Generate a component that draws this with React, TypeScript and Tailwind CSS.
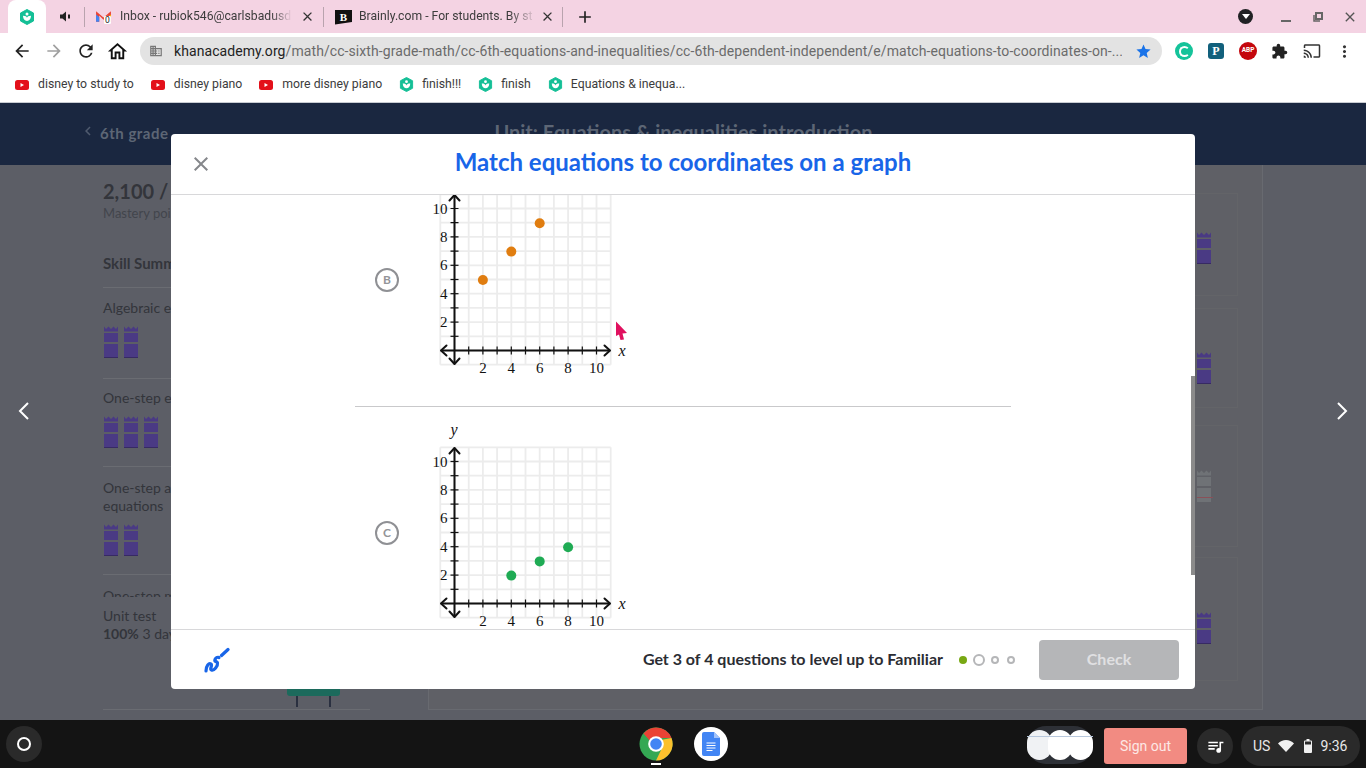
import {
  MdAdd,
  MdArrowBack,
  MdArrowForward,
  MdCast,
  MdChevronLeft,
  MdClose,
  MdDomain,
  MdExtension,
  MdMoreVert,
  MdOutlineHome,
  MdQueueMusic,
  MdRefresh,
  MdStar,
} from "react-icons/md";

const KhanIcon = ({ size = 15 }: { size?: number }) => (
  <svg width={size} height={size} viewBox="0 0 16 16" className="shrink-0">
    <path d="M8 0.500 14.500 4v8L8 15.500 1.500 12V4z" fill="#14bf96" stroke="#14bf96" strokeLinejoin="round" />
    <path d="M4 6.800c2.200 0 4 .7 4 2.200 0-1.500 1.800-2.200 4-2.200 0 3-1.800 5.200-4 5.200S4 9.800 4 6.800z" fill="#fff" />
    <circle cx="8" cy="5" r="1.500" fill="#fff" />
  </svg>
);

const YoutubeIcon = () => (
  <svg width="14" height="10" viewBox="0 0 14 10" className="shrink-0">
    <rect width="14" height="10" rx="2.500" fill="#e3101a" />
    <path d="M5.500 3v4l3.500-2z" fill="#fff" />
  </svg>
);

const GmailIcon = () => (
  <svg width="17" height="15" viewBox="0 0 16 14" className="shrink-0">
    <path d="M1 12V2l7 6 7-6v10h-3V6L8 10 4 6v6z" fill="#ea4335" />
    <path d="M1 2v3l3 2.500V12H1z" fill="#4285f4" />
    <path d="M15 2v3l-3 2.500V12h3z" fill="#fbbc04" />
    <rect x="8.500" y="6.500" width="6.500" height="7.500" rx="1" fill="#fff" />
    <text x="11.700" y="13.500" textAnchor="middle" fontSize="8" fontFamily="Roboto, sans-serif" fill="#222">
      0
    </text>
  </svg>
);

const BrainlyIcon = () => (
  <svg width="17" height="17" viewBox="0 0 17 17" className="shrink-0">
    <path d="M0 2h17v12L0 16.500z" fill="#111" />
    <text x="8.500" y="12.500" textAnchor="middle" fontSize="11" fontWeight="700" fontFamily="'Liberation Serif', serif" fill="#fff">
      B
    </text>
  </svg>
);

const TabDivider = () => <div className="w-px h-5 bg-[#b9a3ae] shrink-0" />;

const TabStrip = () => (
  <div className="h-[33px] bg-[#f4d3e3] flex items-center shrink-0 text-[#3c3c3c]">
    <div className="ml-[8px] w-[38px] h-[33px] bg-white rounded-t-lg flex items-center justify-center shrink-0">
      <KhanIcon size={16} />
    </div>
    <div className="w-[38px] flex justify-center shrink-0">
      <svg width="11" height="11" viewBox="0 0 11 11">
        <path d="M0 3.500h2.500L6 .5v10L2.500 7.500H0z" fill="#222" />
        <rect x="8" y="3.500" width="2" height="4" fill="#222" />
      </svg>
    </div>
    <TabDivider />
    <div className="w-[238px] flex items-center pl-[10px] shrink-0">
      <GmailIcon />
      <span className="ml-[8px] w-[172px] text-[12.2px] whitespace-nowrap overflow-hidden [mask-image:linear-gradient(to_right,black_88%,transparent)]">
        Inbox - rubiok546@carlsbadusd
      </span>
      <MdClose size={15} className="ml-[8px] text-[#333]" />
    </div>
    <TabDivider />
    <div className="w-[238px] flex items-center pl-[11px] shrink-0">
      <BrainlyIcon />
      <span className="ml-[7px] w-[177px] text-[12.2px] whitespace-nowrap overflow-hidden [mask-image:linear-gradient(to_right,black_85%,transparent)]">
        Brainly.com - For students. By st
      </span>
      <MdClose size={15} className="ml-[4px] text-[#333]" />
    </div>
    <TabDivider />
    <MdAdd size={20} className="ml-[12px] text-[#222]" />
    <div className="ml-auto flex items-center">
      <div className="w-[15px] h-[15px] rounded-full bg-[#202124] flex items-center justify-center mr-[28px]">
        <div className="w-0 h-0 border-x-[4px] border-x-transparent border-t-[5px] border-t-white" />
      </div>
      <div className="w-[10px] h-[2px] bg-[#666] mt-[8px] mr-[22px]" />
      <svg width="10" height="10" viewBox="0 0 10 10" className="mr-[19px]">
        <path d="M3 1h6v6H3z" fill="none" stroke="#666" strokeWidth="2" />
        <path d="M1 3v6h6" fill="none" stroke="#666" strokeWidth="1.500" />
      </svg>
      <MdClose size={16} className="text-[#555] mr-[8px]" />
    </div>
  </div>
);

const Toolbar = () => (
  <div className="h-[36px] bg-white flex items-center shrink-0">
    <div className="w-[140px] flex items-center shrink-0 pl-[12px]">
      <MdArrowBack size={20} className="text-[#222]" />
      <MdArrowForward size={20} className="ml-[12px] text-[#a0a0a0]" />
      <MdRefresh size={20} className="ml-[12px] text-[#222]" />
      <MdOutlineHome size={23} className="ml-[10px] text-[#111]" />
    </div>
    <div className="w-[1022px] h-[28px] bg-[#e3e3e3] rounded-full flex items-center pl-[9px] shrink-0">
      <MdDomain size={14} className="text-[#777] shrink-0" />
      <span className="ml-[11px] w-[948px] text-[14px] tracking-[0.08px] text-[#6b6b6b] whitespace-nowrap overflow-hidden">
        <span className="text-[#222]">khanacademy.org</span>
        /math/cc-sixth-grade-math/cc-6th-equations-and-inequalities/cc-6th-dependent-independent/e/match-equations-to-coordinates-on-...
      </span>
      <MdStar size={17} className="ml-[13px] text-[#1a73e8] shrink-0" />
    </div>
    <div className="flex items-center ml-[13px]">
      <div className="w-[18px] h-[18px] rounded-full bg-[#15c39a] flex items-center justify-center">
        <div className="w-[11px] h-[11px] rounded-full border-2 border-white border-r-transparent" />
      </div>
      <div className="ml-[15px] w-[16px] h-[16px] rounded-[3px] bg-[#12607c] flex items-center justify-center text-white text-[12px] font-bold font-['Liberation_Serif',serif]">
        P
      </div>
      <div className="ml-[15px] w-[18px] h-[18px] rounded-full bg-[#c4070d] flex items-center justify-center text-white text-[6.5px] font-bold">
        ABP
      </div>
      <MdExtension size={17} className="ml-[14px] text-[#222]" />
      <MdCast size={18} className="ml-[15px] text-[#333]" />
      <MdMoreVert size={19} className="ml-[14px] text-[#333]" />
    </div>
  </div>
);

const Bookmark = ({ icon, label, className }: { icon: "yt" | "khan"; label: string; className: string }) => (
  <div className={`flex items-center shrink-0 ${className}`}>
    {icon === "yt" ? <YoutubeIcon /> : <KhanIcon size={15} />}
    <span className={`text-[12.25px] text-[#3c3c3c] whitespace-nowrap ${icon === "yt" ? "ml-[9px]" : "ml-[8px]"}`}>{label}</span>
  </div>
);

const BookmarksBar = () => (
  <div className="h-[34px] bg-white flex items-center shrink-0 border-b border-[#c8ccd2] pb-[2px]">
    <Bookmark icon="yt" label="disney to study to" className="ml-[15px]" />
    <Bookmark icon="yt" label="disney piano" className="ml-[17px]" />
    <Bookmark icon="yt" label="more disney piano" className="ml-[17px]" />
    <Bookmark icon="khan" label="finish!!!" className="ml-[17px]" />
    <Bookmark icon="khan" label="finish" className="ml-[17px]" />
    <Bookmark icon="khan" label="Equations & inequa..." className="ml-[17px]" />
  </div>
);

const Castle = ({ faded }: { faded?: boolean }) => (
  <svg width="14" height="32" viewBox="0 0 14 32" className="shrink-0">
    <g fill={faded ? "#6f7276" : "#4a3a84"}>
      <path d="M0 0.500 2 3 4.500 0.500 7 3 9.500 0.500 12 3 14 0.500V5.500H0z" />
      <rect y="7" width="14" height="9" />
      <rect y="18" width="14" height="14" />
    </g>
    {!faded && <rect y="31" width="14" height="1" fill="#372a63" />}
  </svg>
);

const Castles = ({ count }: { count: number }) => (
  <div className="flex gap-[6px] ml-px">
    {Array.from({ length: count }).map((_, i) => (
      <Castle key={i} />
    ))}
  </div>
);

const BehindPage = () => (
  <div className="flex-1 flex flex-col bg-[#5c5e66] font-['Lato',sans-serif] overflow-hidden">
    <div className="h-[62px] bg-[#1a2740] shrink-0 flex items-center">
      <MdChevronLeft size={18} className="ml-[79px] -mt-[6px] text-[#4f5a6e]" />
      <span className="ml-[3px] -mt-[2px] text-[15px] font-bold tracking-[0.5px] text-[#5d6675]">6th grade</span>
      <span className="ml-[326px] -mt-[4px] text-[20px] font-bold text-[#5d6675] whitespace-nowrap">
        Unit: Equations &amp; inequalities introduction
      </span>
    </div>
    <div className="flex-1 flex">
      <div className="ml-[103px] w-[267px] shrink-0 text-[#33353b] text-[14px]">
        <div className="mt-[13px] h-[26px] text-[20px] font-bold leading-[26px]">2,100 / 3,000</div>
        <div className="h-[18px] text-[13px] leading-[18px] text-[#42454c]">Mastery points</div>
        <div className="mt-[31px] pb-[14px] text-[15px] font-bold leading-[20px] border-b border-[#6a6c72]">Skill Summary</div>
        <div className="pt-[11px] pb-[20px] border-b border-[#6a6c72]">
          <div className="leading-[18px] mb-[9px]">Algebraic equations</div>
          <Castles count={2} />
        </div>
        <div className="pt-[10px] pb-[18px] border-b border-[#6a6c72]">
          <div className="leading-[18px] mb-[9px]">One-step equations</div>
          <Castles count={3} />
        </div>
        <div className="pt-[12px] pb-[18px] border-b border-[#6a6c72]">
          <div className="leading-[18px] mb-[9px]">
            One-step addition
            <br />
            equations
          </div>
          <Castles count={2} />
        </div>
        <div className="h-[22px] pt-[12px] overflow-hidden">
          <div className="leading-[18px]">One-step multiplication</div>
        </div>
        <div className="mt-[10px] leading-[18px]">Unit test</div>
        <div className="leading-[18px]">
          <b>100%</b> 3 days ago
        </div>
        <div className="mt-[45px] ml-[184px] w-[53px] h-[8px] bg-[#1c6a5c] rounded-b-[3px]" />
        <div className="ml-[193px] w-[35px] h-[11px] border-x-2 border-[#2a3040]" />
        <div className="mt-[2px] border-b border-[#6a6c72]" />
      </div>
      <div className="ml-[58px] w-[835px] h-[545px] border-x border-b border-[#686a70] bg-[#5f6066] pt-[28px] pr-[24px] flex flex-col">
        <div className="h-[103px] border border-[#636468] pt-[38px] flex justify-end pr-[26px]">
          <Castle />
        </div>
        <div className="mt-[12px] h-[100px] border border-[#636468] pt-[43px] flex justify-end pr-[26px]">
          <Castle />
        </div>
        <div className="mt-[17px] h-[122px] border border-[#636468] pt-[44px] flex justify-end pr-[26px]">
          <div className="relative h-[32px]">
            <Castle faded />
            <div className="absolute left-0 bottom-[4px] w-[16px] h-px bg-[#8a5058]" />
          </div>
        </div>
        <div className="mt-[10px] h-[124px] border border-[#636468] pt-[54px] flex justify-end pr-[26px]">
          <Castle />
        </div>
      </div>
    </div>
  </div>
);

const GRID = Array.from({ length: 13 }).map((_, i) => i - 1);

// plot origin inside the svg, one unit is 14.2px
const OX = 24.5;
const OY = 183.5;
const U = 14.2;

const Graph = ({ points, color, showY }: { points: [number, number][]; color: string; showY?: boolean }) => (
  <svg width="200" height="215" viewBox="0 0 200 215" className="shrink-0">
    {GRID.map((n) => (
      <g key={n} stroke="#ececec" strokeWidth="1.800">
        <line x1={OX + n * U} y1={OY + U} x2={OX + n * U} y2={OY - 11 * U} />
        <line x1={OX - U} y1={OY - n * U} x2={OX + 11 * U} y2={OY - n * U} />
      </g>
    ))}
    {GRID.slice(2, 12).map((n) => (
      <g key={n} stroke="#111" strokeWidth="1.200">
        <line x1={OX + n * U} y1={OY - 4} x2={OX + n * U} y2={OY + 4} />
        <line x1={OX - 4} y1={OY - n * U} x2={OX + 4} y2={OY - n * U} />
      </g>
    ))}
    <g stroke="#111" strokeWidth="2" fill="none" strokeLinecap="round" strokeLinejoin="round">
      <line x1={OX - 13} y1={OY} x2={OX + 155} y2={OY} />
      <line x1={OX} y1={OY + 13} x2={OX} y2={OY - 155} />
      <path d={`M${OX - 8} ${OY - 5} L${OX - 13.500} ${OY} L${OX - 8} ${OY + 5}`} />
      <path d={`M${OX + 150} ${OY - 5} L${OX + 155.500} ${OY} L${OX + 150} ${OY + 5}`} />
      <path d={`M${OX - 5} ${OY - 150} L${OX} ${OY - 155.500} L${OX + 5} ${OY - 150}`} />
      <path d={`M${OX - 5} ${OY + 8} L${OX} ${OY + 13.500} L${OX + 5} ${OY + 8}`} />
    </g>
    {[2, 4, 6, 8, 10].map((n) => (
      <g key={n} fontFamily="'Liberation Serif', serif" fontSize="15" fill="#111">
        <text x={OX + n * U} y={OY + 22} textAnchor="middle">
          {n}
        </text>
        <text x={OX - 7} y={OY - n * U + 5} textAnchor="end">
          {n}
        </text>
      </g>
    ))}
    <text x={OX + 164} y={OY + 5} fontFamily="'Liberation Serif', serif" fontStyle="italic" fontSize="16" fill="#111">
      x
    </text>
    {showY && (
      <text x={OX - 4} y={15} fontFamily="'Liberation Serif', serif" fontStyle="italic" fontSize="16" fill="#111">
        y
      </text>
    )}
    {points.map(([x, y]) => (
      <circle key={x} cx={OX + x * U} cy={OY - y * U + 0.5} r="5" fill={color} />
    ))}
  </svg>
);

const ChoiceBadge = ({ label }: { label: string }) => (
  <div className="mt-[101px] w-6 h-6 rounded-full border-2 border-[#8f9094] flex items-center justify-center text-[12px] font-bold text-[#939498] shrink-0">
    {label}
  </div>
);

const ScribbleIcon = () => (
  <svg width="26" height="26" viewBox="0 0 26 26">
    <path
      d="M2 24C2 19 5 15.500 7 17 9 18.500 5 22 7.500 23 10 24 14 19 13.500 16 13 14 10 15 11 12.500 12 10.500 14 10 15 10.500"
      fill="none"
      stroke="#1865e8"
      strokeWidth="3.200"
      strokeLinecap="round"
    />
    <path d="M17.500 8.500 24 2.500" stroke="#1865e8" strokeWidth="3.200" strokeLinecap="round" />
  </svg>
);

const ExerciseModal = () => (
  <div className="absolute left-[171px] top-[134px] w-[1024px] h-[555px] bg-white rounded-[4px] flex flex-col font-['Lato',sans-serif] overflow-hidden">
    <div className="h-[61px] border-b border-[#d8d8da] flex items-center justify-center relative shrink-0">
      <MdClose size={24} className="absolute left-[18px] top-[18px] text-[#85878b]" />
      <h1 className="text-[24px] font-bold text-[#1865e8] -mt-[4px]">Match equations to coordinates on a graph</h1>
    </div>
    <div className="flex-1 overflow-hidden relative">
      <div className="ml-[184px] w-[656px] -mt-[28px]">
        <div className="flex pl-5 pb-[24px] border-b border-[#c9c9cb]">
          <ChoiceBadge label="B" />
          <div className="ml-[31px]">
            <Graph color="#e07d10" points={[[2, 5], [4, 7], [6, 9]]} />
          </div>
        </div>
        <div className="flex pl-5 pt-[13px]">
          <ChoiceBadge label="C" />
          <div className="ml-[31px]">
            <Graph color="#1fab54" showY points={[[4, 2], [6, 3], [8, 4]]} />
          </div>
        </div>
      </div>
      <div className="absolute right-0 top-[181px] w-[4px] h-[199px] bg-[#8b8b8b]" />
    </div>
    <div className="h-[60px] border-t border-[#d8d8da] flex items-center shrink-0">
      <div className="ml-[33px] mt-[1px]">
        <ScribbleIcon />
      </div>
      <span className="ml-auto -mt-[2px] text-[16px] font-bold text-[#2b2d33] whitespace-nowrap">Get 3 of 4 questions to level up to Familiar</span>
      <div className="ml-[16px] flex items-center">
        <div className="w-2 h-2 rounded-full bg-[#78a813]" />
        <div className="ml-[6px] w-3 h-3 rounded-full border-2 border-[#b5b6b8]" />
        <div className="ml-[6px] w-2 h-2 rounded-full border-2 border-[#b5b6b8]" />
        <div className="ml-[8px] w-2 h-2 rounded-full border-2 border-[#b5b6b8]" />
      </div>
      <button className="ml-[24px] mr-[16px] w-[140px] h-[40px] pb-[2px] rounded-[4px] bg-[#b5b6b8] text-[16px] font-bold text-[#e0e0e2]">
        Check
      </button>
    </div>
  </div>
);

const Cursor = () => (
  <svg width="13" height="20" viewBox="0 0 13 20" className="absolute left-[615px] top-[321px]">
    <path d="M1 0.500 12 12 7.500 12.500 9 18.500 5.500 19 4 13.500 1 15z" fill="#e0115f" />
  </svg>
);

const ChromeLogo = () => (
  <svg width="34" height="34" viewBox="0 0 34 34">
    <circle cx="17" cy="17" r="16.500" fill="#34a853" />
    <path d="M17 .5A16.500 16.500 0 0 1 32.500 11H17A6 6 0 0 0 11.500 14.500L4.500 6.500A16.500 16.500 0 0 1 17 .5z" fill="#ea4335" />
    <path d="M32.500 11A16.500 16.500 0 0 1 17 33.500L23 21 21.500 13z" fill="#fbc02d" />
    <circle cx="17" cy="17" r="7.800" fill="#fff" />
    <circle cx="17" cy="17" r="5.800" fill="#4285f4" />
  </svg>
);

const DocsLogo = () => (
  <div className="w-[34px] h-[34px] rounded-full bg-white flex items-center justify-center">
    <svg width="18" height="24" viewBox="0 0 18 24">
      <path d="M2 0h10l6 6v16a2 2 0 0 1-2 2H2a2 2 0 0 1-2-2V2a2 2 0 0 1 2-2z" fill="#4285f4" />
      <path d="M12 0l6 6h-6z" fill="#a1c2fa" />
      <path d="M4.500 11h9M4.500 13.500h9M4.500 16h9M4.500 18.500h6" stroke="#fff" strokeWidth="1" />
    </svg>
  </div>
);

const Shelf = () => (
  <div className="h-[48px] bg-[#141414] flex items-center shrink-0 font-['Roboto',sans-serif]">
    <div className="ml-[6px] w-9 h-9 rounded-full bg-[#2a2a2a] flex items-center justify-center shrink-0">
      <div className="w-[14px] h-[14px] rounded-full border-2 border-white" />
    </div>
    <div className="ml-[597px] relative shrink-0">
      <ChromeLogo />
      <div className="absolute left-[12px] top-[36px] w-[10px] h-[2px] bg-white" />
    </div>
    <div className="ml-[21px] shrink-0">
      <DocsLogo />
    </div>
    <div className="ml-[299px] mt-[2px] w-[66px] h-[38px] rounded-full bg-[#2d3036] flex items-center justify-center -space-x-[4px] shrink-0">
      <div className="w-[26px] h-[30px] rounded-full bg-[#f0f2f4] flex flex-col pt-[6px]">
        <div className="h-px bg-[#b8c8dc]" />
      </div>
      <div className="w-[26px] h-[30px] rounded-full bg-white flex flex-col pt-[6px]">
        <div className="h-px bg-[#b8c8dc]" />
      </div>
      <div className="w-[26px] h-[30px] rounded-full bg-white flex flex-col pt-[6px]">
        <div className="h-px bg-[#b8c8dc]" />
      </div>
    </div>
    <div className="ml-[11px] mt-[4px] w-[83px] h-[36px] rounded-[3px] bg-[#f28b82] flex items-center justify-center text-[14px] text-[#fde8e6] shrink-0">
      Sign out
    </div>
    <div className="ml-[10px] mt-[4px] w-9 h-9 rounded-full bg-[#2a2a2a] flex items-center justify-center shrink-0">
      <MdQueueMusic size={19} className="text-white" />
    </div>
    <div className="ml-[8px] mt-[4px] w-[119px] h-[40px] rounded-full bg-[#2a2a2a] flex items-center pl-[12px] text-[14px] text-[#e8e8e8] shrink-0">
      US
      <svg width="16" height="12" viewBox="0 0 16 12" className="ml-[8px]">
        <path d="M0 3.500C2 1.500 5 0 8 0s6 1.500 8 3.500L8 12z" fill="#f0f0f0" />
      </svg>
      <svg width="8" height="14" viewBox="0 0 8 14" className="ml-[10px]">
        <path d="M2.500 0h3v1.500H7a1 1 0 0 1 1 1V13a1 1 0 0 1-1 1H1a1 1 0 0 1-1-1V2.500a1 1 0 0 1 1-1h1.500z" fill="#f0f0f0" />
        <rect x="1" y="2.500" width="6" height="3" fill="#2a2a2a" />
      </svg>
      <span className="ml-[8px]">9:36</span>
    </div>
  </div>
);

const SlideArrow = ({ className, d }: { className: string; d: string }) => (
  <svg width="14" height="20" viewBox="0 0 14 20" className={`absolute top-[401px] ${className}`}>
    <path d={d} fill="none" stroke="#fff" strokeWidth="2" />
  </svg>
);

export default function App() {
  return (
    <div className="relative w-[1366px] h-[768px] flex flex-col overflow-hidden font-['Roboto',sans-serif]">
      <TabStrip />
      <Toolbar />
      <BookmarksBar />
      <BehindPage />
      <Shelf />
      <ExerciseModal />
      <SlideArrow className="left-[17px]" d="M11 2 3 10l8 8" />
      <SlideArrow className="left-[1335px]" d="M3 2l8 8-8 8" />
      <Cursor />
    </div>
  );
}
